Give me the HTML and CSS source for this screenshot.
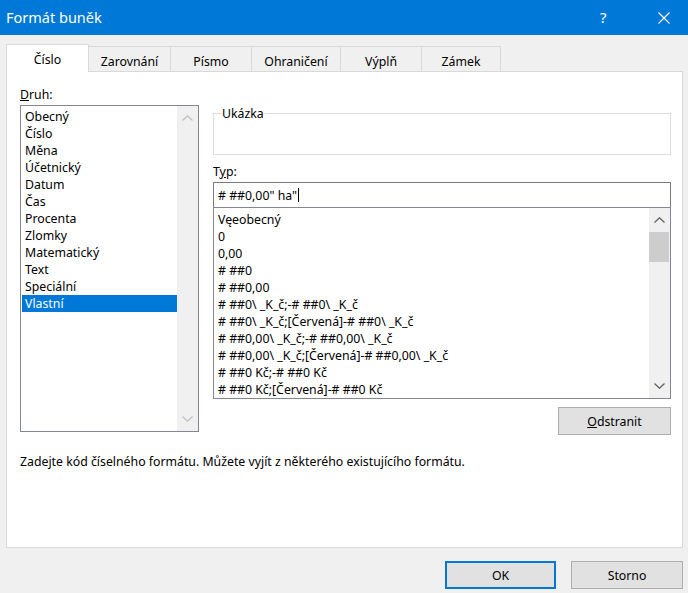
FILE: index.html
```html
<!DOCTYPE html>
<html lang="cs">
<head>
<meta charset="utf-8">
<title>Formát buněk</title>
<link rel="stylesheet" href="styles.css">
</head>
<body>
<div class="dialog">
  <div class="titlebar">
    <span class="title">Formát buněk</span>
    <span class="help">?</span>
    <svg class="close" width="12" height="12" viewBox="0 0 12 12"><path d="M0.5 0.5L11.5 11.5M11.5 0.5L0.5 11.5" stroke="#ffffff" stroke-width="1.1" fill="none"/></svg>
  </div>
  <div class="main">
    <div class="tabs">
      <div class="tab active t1">Číslo</div>
      <div class="tab t2">Zarovnání</div>
      <div class="tab t3">Písmo</div>
      <div class="tab t4">Ohraničení</div>
      <div class="tab t5">Výplň</div>
      <div class="tab t6">Zámek</div>
    </div>
    <div class="panel">
      <div class="cols">
        <div class="left">
          <div class="label"><u>D</u>ruh:</div>
          <div class="listbox">
            <ul class="items">
              <li>Obecný</li>
              <li>Číslo</li>
              <li>Měna</li>
              <li>Účetnický</li>
              <li>Datum</li>
              <li>Čas</li>
              <li>Procenta</li>
              <li>Zlomky</li>
              <li>Matematický</li>
              <li>Text</li>
              <li>Speciální</li>
              <li class="sel">Vlastní</li>
            </ul>
            <div class="sb disabled">
              <div class="arrow"><svg width="11" height="6" viewBox="0 0 11 6"><path d="M0.5 5.5L5.5 0.8L10.5 5.5" stroke="currentColor" stroke-width="1.2" fill="none"/></svg></div>
              <div class="track"></div>
              <div class="arrow"><svg width="11" height="6" viewBox="0 0 11 6"><path d="M0.5 0.5L5.5 5.2L10.5 0.5" stroke="currentColor" stroke-width="1.2" fill="none"/></svg></div>
            </div>
          </div>
        </div>
        <div class="right">
          <fieldset class="sample">
            <legend>Ukázka</legend>
            <div class="sample-body"></div>
          </fieldset>
          <div class="label typ">T<u>y</u>p:</div>
          <div class="input"><span>#&nbsp;##0,00"&nbsp;ha"</span><span class="caret"></span></div>
          <div class="fmtlist">
            <ul class="items fmt">
              <li>Vęeobecný</li>
              <li>0</li>
              <li>0,00</li>
              <li># ##0</li>
              <li># ##0,00</li>
              <li># ##0\ _K_č;-# ##0\ _K_č</li>
              <li># ##0\ _K_č;[Červená]-# ##0\ _K_č</li>
              <li># ##0,00\ _K_č;-# ##0,00\ _K_č</li>
              <li># ##0,00\ _K_č;[Červená]-# ##0,00\ _K_č</li>
              <li># ##0 Kč;-# ##0 Kč</li>
              <li># ##0 Kč;[Červená]-# ##0 Kč</li>
            </ul>
            <div class="sb">
              <div class="arrow"><svg width="11" height="6" viewBox="0 0 11 6"><path d="M0.5 5.5L5.5 0.8L10.5 5.5" stroke="currentColor" stroke-width="1.3" fill="none"/></svg></div>
              <div class="track"><div class="thumb"></div></div>
              <div class="arrow"><svg width="11" height="6" viewBox="0 0 11 6"><path d="M0.5 0.5L5.5 5.2L10.5 0.5" stroke="currentColor" stroke-width="1.3" fill="none"/></svg></div>
            </div>
          </div>
          <div class="btnrow"><button class="btn del"><u>O</u>dstranit</button></div>
        </div>
      </div>
      <p class="desc">Zadejte kód číselného formátu. Můžete vyjít z některého existujícího formátu.</p>
    </div>
    <div class="footer">
      <button class="btn ok">OK</button>
      <button class="btn cancel">Storno</button>
    </div>
  </div>
</div>
</body>
</html>
```

FILE: styles.css
```css
* { box-sizing: border-box; }
html, body {
  margin: 0;
  padding: 0;
}
body {
  width: 688px;
  height: 593px;
  overflow: hidden;
  background: #f0f0f0;
  font-family: "Noto Sans", "Open Sans", sans-serif;
  font-size: 12.3px;
  color: #000;
}
.dialog {
  width: 688px;
  height: 593px;
}
.titlebar {
  height: 35px;
  background: #0078d7;
  color: #fff;
  display: flex;
  align-items: center;
  padding-left: 6px;
}
.title {
  flex: 1;
  font-size: 14.5px;
  padding-bottom: 1px;
}
.help {
  font-size: 15px;
  width: 12px;
  margin-right: 46px;
  padding-bottom: 2px;
}
.close {
  margin-right: 18px;
  display: block;
}
.main {
  padding: 9px 5px 0 6px;
}
.tabs {
  display: flex;
  align-items: flex-end;
  height: 27px;
}
.tab {
  height: 25px;
  background: #f0f0f0;
  border-top: 1px solid #d9d9d9;
  border-right: 1px solid #d9d9d9;
  display: flex;
  align-items: center;
  justify-content: center;
  padding-top: 4px;
}
.tab.active {
  height: 28px;
  margin-bottom: -1px;
  background: #fff;
  border-left: 1px solid #d9d9d9;
  position: relative;
  z-index: 1;
  padding-top: 2px;
}
.t1 { width: 83px; }
.t2 { width: 82px; }
.t3 { width: 81px; }
.t4 { width: 89px; }
.t5 { width: 81px; }
.t6 { width: 79px; }
.panel {
  width: 677px;
  height: 477px;
  background: #fff;
  border: 1px solid #d9d9d9;
  padding: 14px 11px 0 13px;
}
.cols {
  display: flex;
  gap: 14px;
  align-items: flex-start;
}
.label {
  line-height: 17px;
  height: 17px;
}
.left {
  width: 179px;
}
.listbox {
  margin-top: 2px;
  height: 327px;
  border: 1px solid #828790;
  display: flex;
}
.items {
  list-style: none;
  margin: 0;
  padding: 2px 0 0 1px;
  flex: 1;
  overflow: hidden;
}
.items li {
  line-height: 17px;
  height: 17px;
  padding-left: 3px;
  white-space: nowrap;
}
.items li.sel {
  background: #0078d7;
  color: #fff;
}
.sb {
  width: 21px;
  background: #f0f0f0;
  display: flex;
  flex-direction: column;
  color: #606060;
}
.sb.disabled {
  color: #bfbfbf;
}
.arrow {
  height: 24px;
  display: flex;
  align-items: center;
  justify-content: center;
}
.arrow svg { display: block; }
.track {
  flex: 1;
}
.thumb {
  height: 30px;
  margin: 0 1px 0 0;
  background: #cdcdcd;
}
.right {
  width: 458px;
  margin-top: 19px;
}
.sample {
  margin: 0;
  padding: 0;
  border: 1px solid #dcdcdc;
}
.sample legend {
  margin-left: 7px;
  padding: 0 1px;
  line-height: 17px;
}
.sample-body {
  height: 32px;
}
.typ {
  margin-top: 8px;
}
.input {
  margin-top: 2px;
  height: 26px;
  border: 1px solid #7a7a7a;
  display: flex;
  align-items: center;
  padding-left: 4px;
  white-space: nowrap;
}
.caret {
  display: inline-block;
  width: 1px;
  height: 14px;
  background: #000;
  margin-left: 1px;
}
.fmtlist {
  margin-top: -1px;
  height: 192px;
  border: 1px solid #828790;
  display: flex;
}
.fmt {
  padding: 3px 0 0 1px;
}
.fmt li {
  padding-left: 3px;
}
.btnrow {
  display: flex;
  justify-content: flex-end;
  margin-top: 8px;
}
.btn {
  font-family: inherit;
  font-size: 12.3px;
  color: #000;
  background: #e1e1e1;
  border: 1px solid #adadad;
  height: 28px;
  padding: 0;
  margin: 0;
}
.del {
  width: 113px;
}
.desc {
  margin: 18px 0 0 0;
  line-height: 17px;
}
.footer {
  display: flex;
  justify-content: flex-end;
  gap: 15px;
  margin-top: 13px;
  padding-right: 0;
}
.ok {
  width: 111px;
  border: 2px solid #0078d7;
}
.cancel {
  width: 112px;
}
```
